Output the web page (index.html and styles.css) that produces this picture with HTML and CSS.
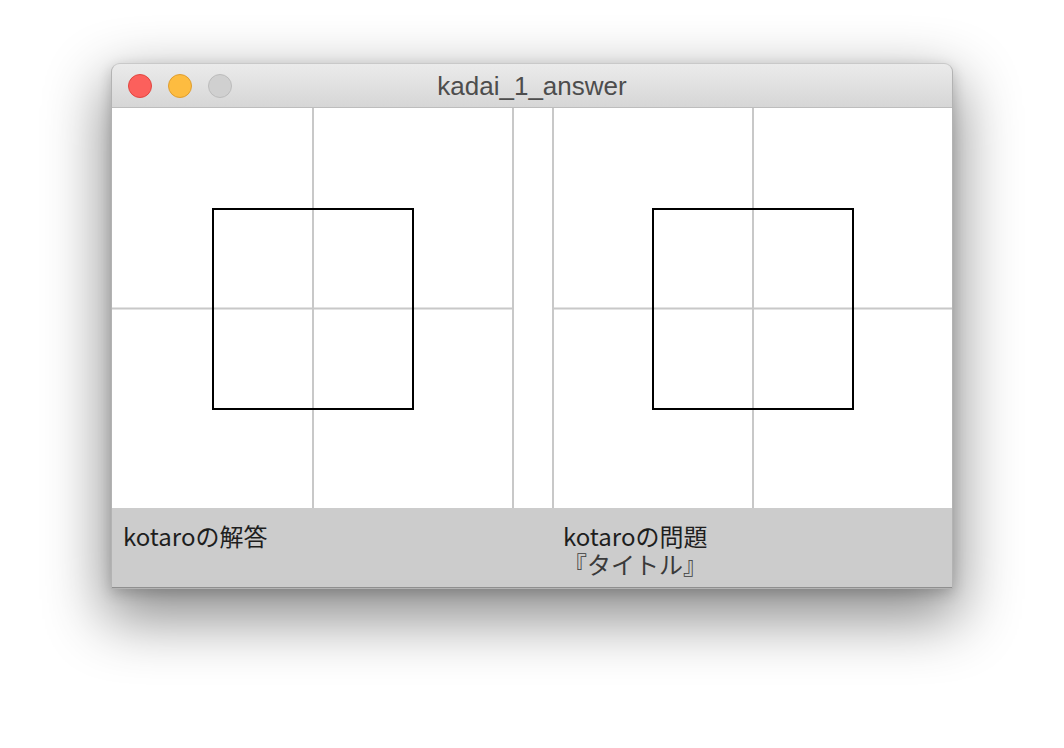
FILE: index.html
```html
<!DOCTYPE html>
<html lang="ja">
<head>
<meta charset="utf-8">
<title>kadai_1_answer</title>
<link rel="stylesheet" href="styles.css">
</head>
<body>
<div class="window">
  <div class="titlebar">
    <div class="lights">
      <span class="light red"></span>
      <span class="light yellow"></span>
      <span class="light gray"></span>
    </div>
    <div class="title">kadai_1_answer</div>
  </div>
  <div class="canvases">
    <svg class="canvas canvas-left" width="402" height="400" viewBox="0 0 402 400">
      <line x1="201" y1="0" x2="201" y2="400" class="grid"/>
      <line x1="401" y1="0" x2="401" y2="400" class="grid"/>
      <line x1="0" y1="200.5" x2="401" y2="200.5" class="grid"/>
      <rect x="101" y="101" width="200" height="200" class="square"/>
    </svg>
    <div class="spacer"></div>
    <svg class="canvas canvas-right" width="400" height="400" viewBox="0 0 400 400">
      <line x1="1" y1="0" x2="1" y2="400" class="grid"/>
      <line x1="201" y1="0" x2="201" y2="400" class="grid"/>
      <line x1="1" y1="200.5" x2="400" y2="200.5" class="grid"/>
      <rect x="101" y="101" width="200" height="200" class="square"/>
    </svg>
  </div>
  <div class="panel">
    <div class="label label-left">
      <div class="line">kotaroの解答</div>
    </div>
    <div class="label label-right">
      <div class="line">kotaroの問題</div>
      <div class="line sub">『タイトル』</div>
    </div>
  </div>
</div>
</body>
</html>
```

FILE: styles.css
```css
html, body {
  margin: 0;
  padding: 0;
  background: #ffffff;
}

body {
  width: 1064px;
  height: 748px;
  overflow: hidden;
}

.window {
  margin: 63px 0 0 111px;
  width: 840px;
  border: 1px solid #b3b3b3;
  border-top-color: #c9c9c9;
  border-radius: 9px 9px 0 0;
  box-shadow: 0 24px 60px 6px rgba(0, 0, 0, 0.45), 0 4px 14px rgba(0, 0, 0, 0.18);
  background: #cccccc;
  display: flex;
  flex-direction: column;
}

.titlebar {
  height: 43px;
  border-bottom: 1px solid #bdbdbd;
  border-radius: 8px 8px 0 0;
  background: linear-gradient(#ebebeb, #d6d6d6);
  display: flex;
  align-items: center;
  position: relative;
}

.lights {
  display: flex;
  gap: 16px;
  padding-left: 16px;
}

.light {
  width: 22px;
  height: 22px;
  border-radius: 50%;
  display: block;
}

.red {
  background: #fc605c;
  border: 1px solid #e14640;
}

.yellow {
  background: #fdbc40;
  border: 1px solid #df9e2f;
}

.gray {
  background: #d0d0d0;
  border: 1px solid #bcbcbc;
}

.title {
  position: absolute;
  left: 0;
  right: 0;
  top: 0;
  bottom: 0;
  display: flex;
  align-items: center;
  justify-content: center;
  font-family: "Liberation Sans", Arial, sans-serif;
  font-size: 26px;
  color: #4d4d4d;
  padding-top: 1px;
}

.canvases {
  display: flex;
  height: 400px;
  background: #ffffff;
  overflow: hidden;
}

.canvas {
  display: block;
  flex: none;
}

.spacer {
  width: 38px;
  flex: none;
}

.grid {
  stroke: #c8c8c8;
  stroke-width: 2;
}

.square {
  fill: none;
  stroke: #000000;
  stroke-width: 2;
}

.panel {
  height: 79px;
  display: flex;
  border-bottom: 1px solid #8f8f8f;
  background: #cccccc;
}

.label {
  padding: 14px 0 0 11px;
  font-family: "Noto Sans CJK JP", sans-serif;
  font-size: 24px;
  color: #1e1e1e;
}

.label-left {
  flex: none;
  width: 429px;
}

.label-right {
  flex: 1;
}

.line {
  height: 28px;
  line-height: 28px;
}

.sub {
  color: #3a3a3a;
}
```
